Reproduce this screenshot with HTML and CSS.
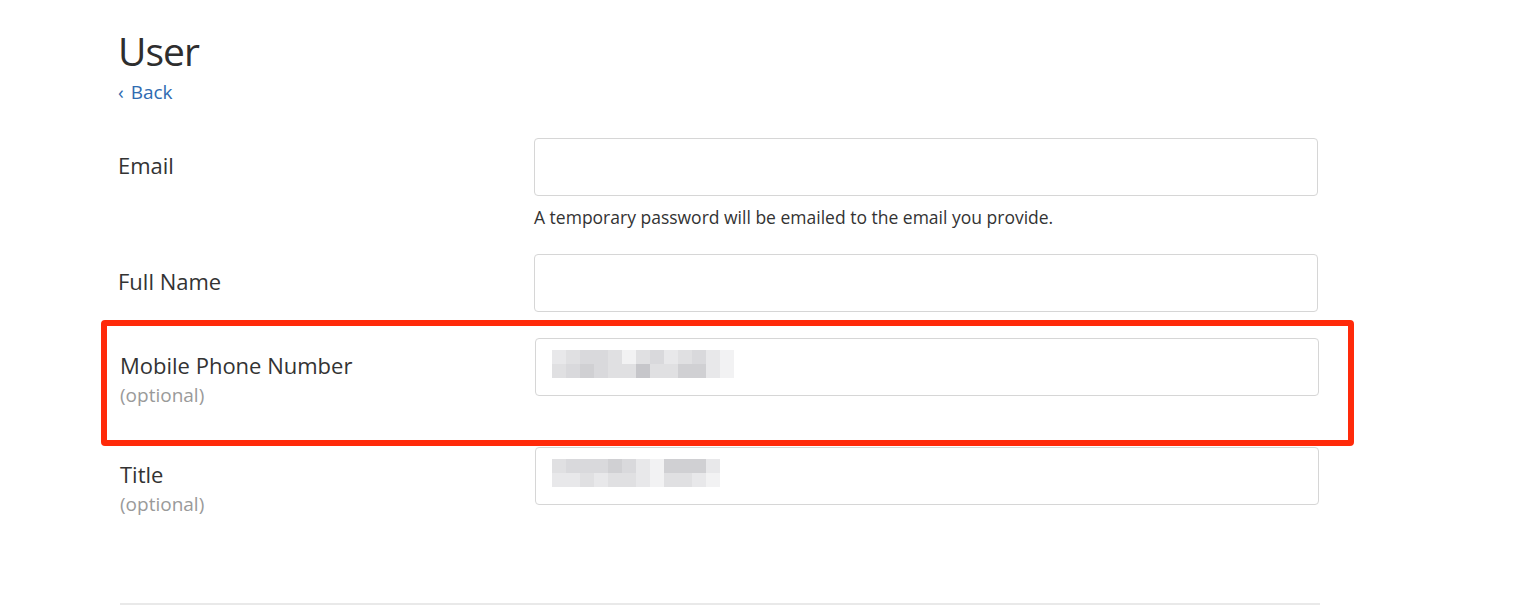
FILE: index.html
```html
<!DOCTYPE html>
<html lang="en">
<head>
    <meta charset="UTF-8">
    <meta name="viewport" content="width=device-width, initial-scale=1.0">
    <title>User</title>
    <link rel="stylesheet" href="styles.css">
</head>
<body>
    <div class="container">
        <div class="header">
            <h1>User</h1>
            <a class="back-link" href="#"><span class="chevron">&lsaquo;</span> Back</a>
        </div>

        <form class="user-form">
            <div class="form-row">
                <div class="label-col">
                    <label for="email">Email</label>
                </div>
                <div class="field-col">
                    <div class="input-box" id="email"></div>
                    <p class="hint">A temporary password will be emailed to the email you provide.</p>
                </div>
            </div>

            <div class="form-row">
                <div class="label-col">
                    <label for="full-name">Full Name</label>
                </div>
                <div class="field-col">
                    <div class="input-box" id="full-name"></div>
                </div>
            </div>

            <div class="form-row optional-row highlighted">
                <div class="label-col">
                    <label for="phone">Mobile Phone Number</label>
                    <span class="optional">(optional)</span>
                </div>
                <div class="field-col">
                    <div class="input-box" id="phone">
                        <div class="mosaic cols-13">
                            <span class="s1"></span><span class="s2"></span><span class="s3"></span><span class="s3"></span><span class="s2"></span><span class="s0"></span><span class="s2"></span><span class="s3"></span><span class="s1"></span><span class="s2"></span><span class="s3"></span><span class="s1"></span><span class="s0"></span>
                            <span class="s2"></span><span class="s3"></span><span class="s4"></span><span class="s3"></span><span class="s2"></span><span class="s2"></span><span class="s5"></span><span class="s2"></span><span class="s2"></span><span class="s4"></span><span class="s4"></span><span class="s1"></span><span class="s0"></span>
                        </div>
                    </div>
                </div>
                <div class="highlight-box"></div>
            </div>

            <div class="form-row optional-row">
                <div class="label-col">
                    <label for="title">Title</label>
                    <span class="optional">(optional)</span>
                </div>
                <div class="field-col">
                    <div class="input-box" id="title">
                        <div class="mosaic cols-12">
                            <span class="s2"></span><span class="s3"></span><span class="s3"></span><span class="s3"></span><span class="s4"></span><span class="s3"></span><span class="s1"></span><span class="s0"></span><span class="s4"></span><span class="s4"></span><span class="s4"></span><span class="s1"></span>
                            <span class="s1"></span><span class="s1"></span><span class="s2"></span><span class="s1"></span><span class="s2"></span><span class="s2"></span><span class="s1"></span><span class="s0"></span><span class="s2"></span><span class="s2"></span><span class="s1"></span><span class="s0"></span>
                        </div>
                    </div>
                </div>
            </div>

            <div class="form-footer"></div>
        </form>
    </div>
</body>
</html>
```

FILE: styles.css
```css
:root {
    --text-color: #333333;
    --muted-color: #9a9a9a;
    --link-color: #2f6bb1;
    --border-color: #d6d6d6;
    --highlight-color: #ff2a0a;
}

* {
    box-sizing: border-box;
    margin: 0;
    padding: 0;
}

body {
    font-family: 'Open Sans', sans-serif;
    color: var(--text-color);
    background: #ffffff;
}

.container {
    width: 1320px;
    padding: 27px 0 0 118px;
}

.header h1 {
    font-size: 39px;
    font-weight: 400;
    line-height: 48px;
    letter-spacing: -1px;
    color: #2e2e2e;
}

.back-link {
    display: inline-block;
    margin-top: 5px;
    font-size: 19px;
    line-height: 24px;
    color: var(--link-color);
    text-decoration: none;
}

.back-link .chevron {
    margin-right: 2px;
}

.user-form {
    margin-top: 34px;
}

.form-row {
    display: grid;
    grid-template-columns: 416px 784px;
    margin-bottom: 26px;
}

.form-row.optional-row {
    grid-template-columns: 417px 784px;
}

.form-row.optional-row .label-col {
    padding-left: 2px;
}

.form-row.highlighted {
    position: relative;
}

.label-col {
    padding-top: 12px;
}

.label-col label {
    display: block;
    font-size: 22px;
    line-height: 30px;
}

.optional {
    display: block;
    font-size: 19px;
    line-height: 30px;
    padding-bottom: 11px;
    color: var(--muted-color);
}

.input-box {
    height: 58px;
    border: 1px solid var(--border-color);
    border-radius: 4px;
    padding: 11px 16px;
    background: #ffffff;
}

.hint {
    margin-top: 10px;
    font-size: 17.5px;
    line-height: 22px;
}

.mosaic {
    display: grid;
    grid-auto-rows: 14px;
    filter: blur(0.6px);
}

.mosaic.cols-13 {
    grid-template-columns: repeat(13, 14px);
}

.mosaic.cols-12 {
    grid-template-columns: repeat(12, 14px);
}

.s0 { background: #f2f2f3; }
.s1 { background: #e8e8ea; }
.s2 { background: #e0e0e2; }
.s3 { background: #d9d9dc; }
.s4 { background: #d0d0d3; }
.s5 { background: #c6c6ca; }

.highlight-box {
    position: absolute;
    top: -18px;
    left: -17px;
    width: 1253px;
    height: 126px;
    border: 6px solid var(--highlight-color);
    border-radius: 4px;
    pointer-events: none;
}

.form-footer {
    margin-top: 73px;
    margin-left: 2px;
    border-top: 2px solid #e9e9e9;
}
```
